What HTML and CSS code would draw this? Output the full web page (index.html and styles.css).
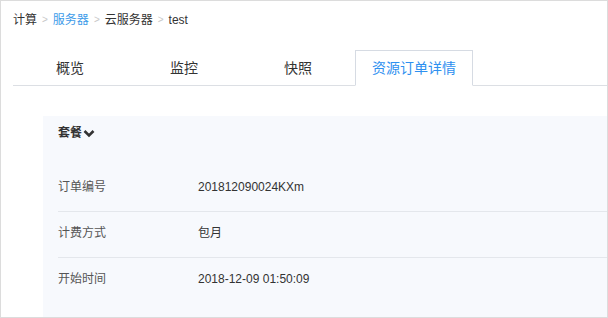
FILE: index.html
```html
<!DOCTYPE html>
<html lang="zh">
<head>
<meta charset="utf-8">
<title>资源订单详情</title>
<link rel="stylesheet" href="styles.css">
</head>
<body>
<div class="page">
  <div class="crumbs">
    <span class="crumb">计算</span>
    <span class="sep">&gt;</span>
    <span class="crumb link">服务器</span>
    <span class="sep">&gt;</span>
    <span class="crumb">云服务器</span>
    <span class="sep">&gt;</span>
    <span class="crumb">test</span>
  </div>
  <div class="tabs">
    <div class="tab">概览</div>
    <div class="tab">监控</div>
    <div class="tab">快照</div>
    <div class="tab active">资源订单详情</div>
  </div>
  <div class="panel">
    <div class="panel-head">套餐<svg class="chev" width="12" height="9" viewBox="0 0 12 9"><polyline points="1.5,2 6,6.5 10.5,2" fill="none" stroke="#333" stroke-width="2.6"/></svg></div>
    <div class="row"><div class="label">订单编号</div><div class="value">201812090024KXm</div></div>
    <div class="row"><div class="label">计费方式</div><div class="value">包月</div></div>
    <div class="row last"><div class="label">开始时间</div><div class="value">2018-12-09 01:50:09</div></div>
  </div>
</div>
</body>
</html>
```

FILE: styles.css
```css
html, body {
  margin: 0;
  padding: 0;
  background: #fff;
}
body {
  font-family: "Liberation Sans", Arial, "Noto Sans CJK SC", sans-serif;
  color: #333;
}
.page {
  box-sizing: border-box;
  width: 608px;
  height: 318px;
  border: 1px solid #dcdcdc;
  padding: 10px 0 0 12px;
  overflow: hidden;
}
.crumbs {
  display: flex;
  align-items: center;
  font-size: 12px;
  line-height: 18px;
  height: 18px;
}
.crumb { color: #333; }
.crumb.link { color: #3d9be9; }
.sep {
  color: #c8c8c8;
  font-size: 10px;
  margin: 0 5px;
}
.tabs {
  display: flex;
  margin-top: 21px;
  border-bottom: 1px solid #dcdfe4;
  height: 35px;
}
.tab {
  width: 114px;
  text-align: center;
  font-size: 14px;
  line-height: 34px;
  border-top: 1px solid transparent;
  color: #333;
}
.tab.active {
  box-sizing: border-box;
  width: 118px;
  margin-left: 0;
  border: 1px solid #d6dbe3;
  border-bottom: 1px solid #fff;
  height: 36px;
  background: #fff;
  color: #2e90f0;
}
.panel {
  margin: 30px 0 0 30px;
  background: #f7f9fd;
  padding: 8px 0 40px 15px;
  height: 220px;
}
.panel-head {
  display: flex;
  align-items: center;
  font-size: 12px;
  font-weight: bold;
  line-height: 18px;
  color: #333;
  margin-bottom: 24px;
}
.chev {
  margin-left: 1px;
  margin-top: 1px;
}
.row {
  display: flex;
  font-size: 12px;
  line-height: 18px;
  padding: 12px 0 15px;
  border-bottom: 1px solid #e4e7ec;
}
.row.last { border-bottom: none; }
.label {
  width: 140px;
  color: #555;
}
.value { color: #333; }
```
